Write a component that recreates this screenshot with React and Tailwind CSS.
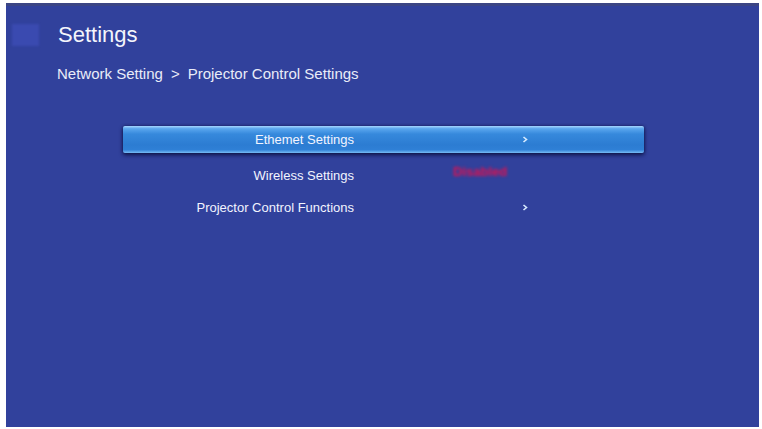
const items = [
  { label: "Ethemet Settings", kind: "arrow", active: true },
  { label: "Wireless Settings", kind: "status", value: "Disabled" },
  { label: "Projector Control Functions", kind: "arrow" },
];

const Chevron = () => (
  <svg width="6" height="7" viewBox="0 0 6 7" className="blur-[0.4px]">
    <polyline points="1.5,1 4.5,3.5 1.5,6" fill="none" stroke="#d8ecff" strokeWidth="1.6" />
  </svg>
);

const MenuRow = ({ item }) => (
  <div
    className={
      "flex items-center h-[27px] w-[521px] " +
      (item.active
        ? "rounded-[2px] bg-[linear-gradient(to_bottom,#a6d6ff_0%,#5aa6ee_10%,#3689dc_30%,#2c7cd2_70%,#2f80d6_88%,#78bcf6_100%)] shadow-[0_2px_4px_rgba(5,10,50,0.75),0_0_3px_rgba(5,10,50,0.5)]"
        : "")
    }
  >
    {/* Label column, right aligned */}
    <span
      className={
        "w-[231px] text-right text-[13px] text-[#f2f4ff] whitespace-nowrap " +
        (item.kind === "status" ? "pt-[4px]" : "")
      }
    >
      {item.label}
    </span>
    {item.kind === "arrow" ? (
      <span className="ml-[168px] flex items-center">
        <Chevron />
      </span>
    ) : (
      <span className="ml-[99px] -mt-[3px] text-[13px] font-bold text-[#e0104e] blur-[1.4px]">
        {item.value}
      </span>
    )}
  </div>
);

const App = () => {
  return (
    <div
      className="w-[762px] h-[429px] bg-white pt-[3px] pl-[6px] pr-[3px] pb-[2px]"
      style={{ fontFamily: '"Liberation Sans", Arial, sans-serif' }}
    >
      <div className="h-full bg-[#31419c] border-t-[3px] border-[#3b4584] flex flex-col">
        {/* Header */}
        <div className="flex items-start pt-[17px]">
          <div className="ml-[6px] w-[27px] h-[22px] mt-[1px] bg-[#3a4ab0] blur-[1px]" />
          <h1 className="ml-[19px] text-[22px] leading-[24px] text-[#f4f5fb]">Settings</h1>
        </div>

        {/* Breadcrumb */}
        <div className="mt-[18px] pl-[51px] text-[15px] leading-[18px] text-[#e9ecf8] flex">
          <span>Network Setting</span>
          <span className="mx-[8px]">&gt;</span>
          <span>Projector Control Settings</span>
        </div>

        {/* Menu */}
        <div className="mt-[43px] ml-[117px] flex flex-col gap-[7px]">
          {items.map((item) => (
            <MenuRow key={item.label} item={item} />
          ))}
        </div>
      </div>
    </div>
  );
};

export default App;
